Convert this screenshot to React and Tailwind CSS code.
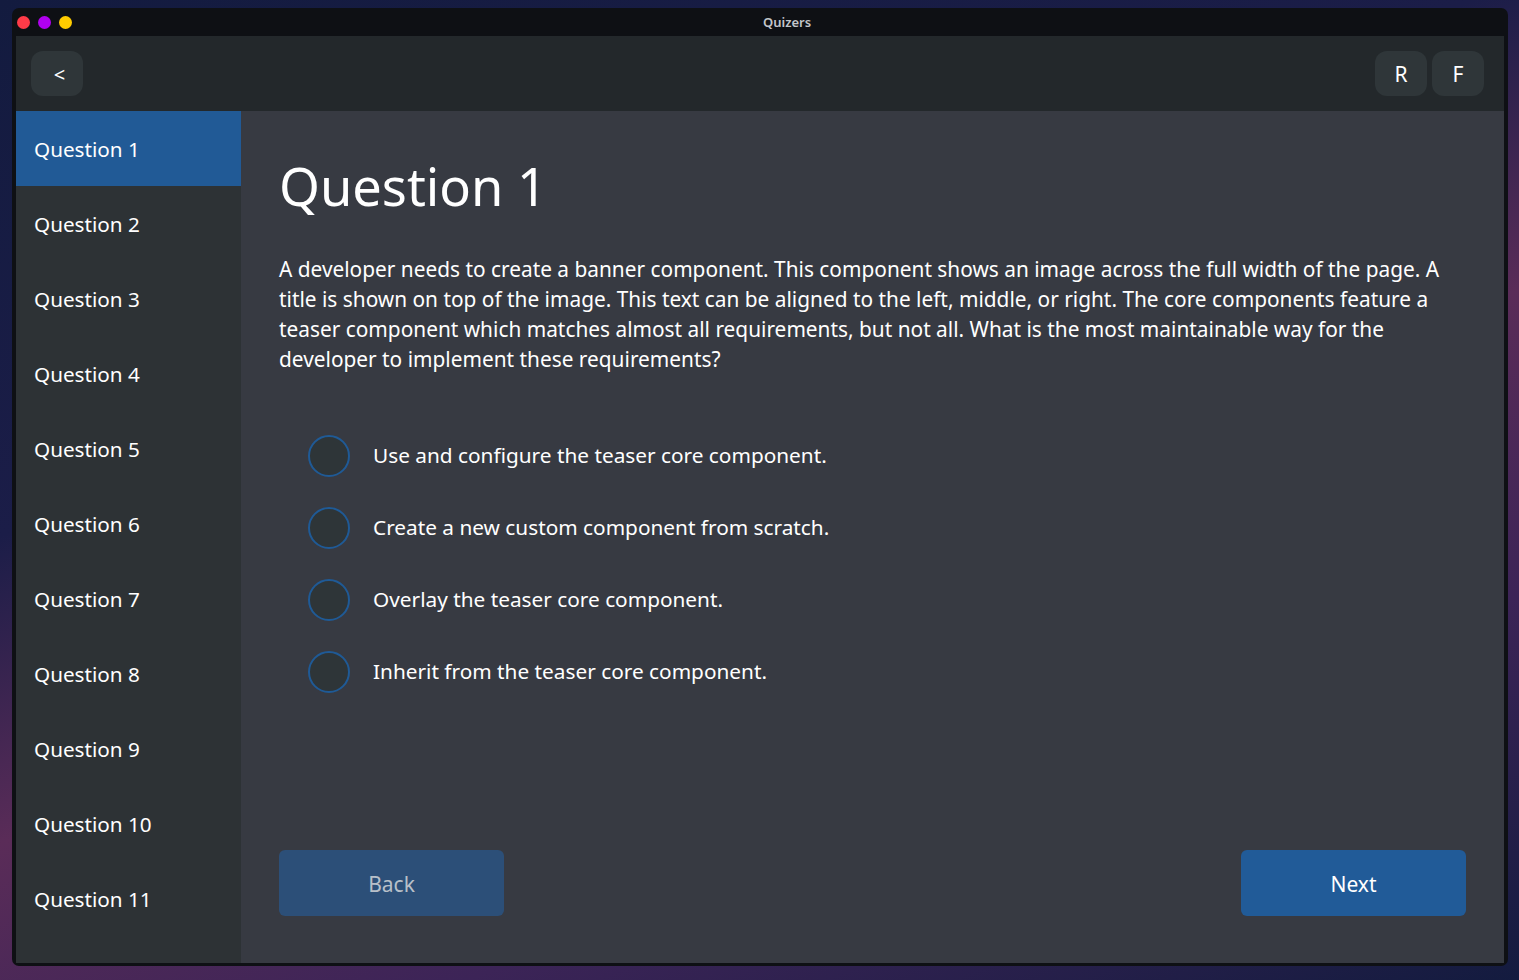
import React, { useState } from "react";

const questions = Array.from({ length: 11 }, (_, i) => `Question ${i + 1}`);

const answers = [
  "Use and configure the teaser core component.",
  "Create a new custom component from scratch.",
  "Overlay the teaser core component.",
  "Inherit from the teaser core component.",
];

const App = () => {
  const [active, setActive] = useState(0);
  const [picked, setPicked] = useState(null);

  return (
    <div
      className="w-[1519px] h-[980px] overflow-hidden pt-[8px] pl-[12px] bg-[linear-gradient(160deg,#131b3f_0%,#1b1d48_35%,#5a2c58_55%,#3c2457_75%,#131b3f_100%)]"
      style={{ fontFamily: '"Noto Sans", "Open Sans", sans-serif' }}
    >
      <div className="w-[1496px] h-[958px] bg-[#0e1014] rounded-[7px] flex flex-col px-[4px] pb-[3px]">
        {/* title bar */}
        <div className="relative h-[28px] flex items-center justify-center shrink-0">
          <div className="absolute left-[1px] top-[8px] flex gap-[8px]">
            <span className="w-[13px] h-[13px] rounded-full bg-[#ff3b48]" />
            <span className="w-[13px] h-[13px] rounded-full bg-[#b000f0]" />
            <span className="w-[13px] h-[13px] rounded-full bg-[#ffcc00]" />
          </div>
          <span className="ml-[54px] pt-[2px] text-[13px] font-semibold text-[#c3c6ca]">Quizers</span>
        </div>

        {/* header */}
        <div className="h-[75px] bg-[#23282b] flex items-center justify-between px-[15px] shrink-0">
          <button className="w-[52px] h-[45px] rounded-[12px] bg-[#2f3639] text-white text-[20px] pl-[5px] pt-[2px]">
            &lt;
          </button>
          <div className="flex gap-[5px] pr-[5px]">
            <button className="w-[52px] h-[45px] rounded-[12px] bg-[#2f3639] text-white text-[21px] pt-[2px]">
              R
            </button>
            <button className="w-[52px] h-[45px] rounded-[12px] bg-[#2f3639] text-white text-[21px] pt-[2px]">
              F
            </button>
          </div>
        </div>

        <div className="flex flex-1 min-h-0">
          {/* sidebar */}
          <div className="w-[225px] bg-[#2d3235] overflow-hidden shrink-0">
            {questions.map((q, i) => (
              <div
                key={q}
                onClick={() => setActive(i)}
                className={`h-[75px] flex items-center pl-[18px] pt-[2px] text-[20.7px] text-white cursor-pointer ${
                  i === active ? "bg-[#215a96]" : ""
                }`}
              >
                {q}
              </div>
            ))}
          </div>

          {/* main */}
          <div className="flex-1 bg-[#373a42] flex flex-col px-[38px] pt-[37px] pb-[47px]">
            <h1 className="text-[52.4px] leading-[76px] text-white">Question 1</h1>
            <p className="mt-[30px] text-[20.85px] leading-[30px] text-white">
              A developer needs to create a banner component. This component shows an image across the full width
              of the page. A title is shown on top of the image. This text can be aligned to the left, middle, or
              right. The core components feature a teaser component which matches almost all requirements, but not
              all. What is the most maintainable way for the developer to implement these requirements?
            </p>

            <div className="mt-[61px] flex flex-col gap-[30px] pl-[29px]">
              {answers.map((a, i) => (
                <label
                  key={a}
                  onClick={() => setPicked(i)}
                  className="flex items-center gap-[23px] cursor-pointer"
                >
                  <span className="w-[42px] h-[42px] rounded-full border-2 border-[#1f5a96] bg-[#2e3538] flex items-center justify-center">
                    {picked === i && <span className="w-[20px] h-[20px] rounded-full bg-[#3d8fe0]" />}
                  </span>
                  <span className="text-[20.8px] text-white">{a}</span>
                </label>
              ))}
            </div>

            <div className="mt-auto flex justify-between">
              <button className="w-[225px] h-[66px] rounded-[6px] bg-[#2c4f78] text-[#b8c0c9] text-[21px] pt-[4px]">
                Back
              </button>
              <button className="w-[225px] h-[66px] rounded-[6px] bg-[#215b98] text-white text-[21px] pt-[4px]">
                Next
              </button>
            </div>
          </div>
        </div>
      </div>
    </div>
  );
};

export default App;
